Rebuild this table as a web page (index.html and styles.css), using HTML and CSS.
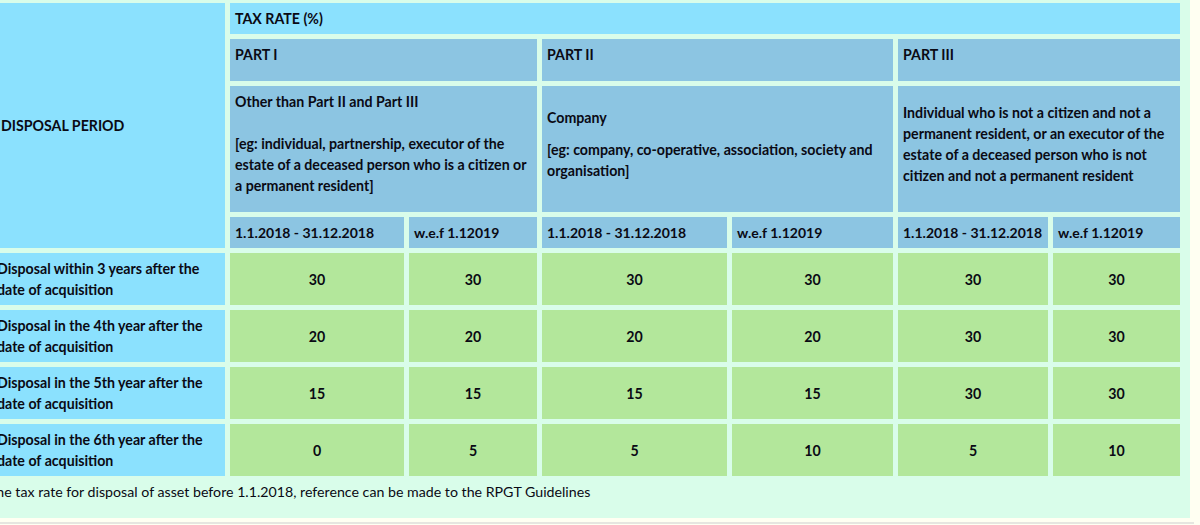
FILE: index.html
```html
<!DOCTYPE html>
<html lang="en">
<head>
<meta charset="utf-8">
<title>RPGT Rates</title>
<link rel="stylesheet" href="styles.css">
</head>
<body>
<div class="page">
  <table class="rates">
    <colgroup>
      <col class="c1"><col class="c2"><col class="c3"><col class="c4"><col class="c5"><col class="c6"><col class="c7">
    </colgroup>
    <tr>
      <th rowspan="4" class="period">DISPOSAL PERIOD</th>
      <th colspan="6" class="top">TAX RATE (%)</th>
    </tr>
    <tr>
      <th colspan="2" class="part"><p>PART I</p></th>
      <th colspan="2" class="part"><p>PART II</p></th>
      <th colspan="2" class="part"><p>PART III</p></th>
    </tr>
    <tr>
      <th colspan="2" class="desc"><p>Other than Part II and Part III<br><br>[eg: individual, partnership, executor of the estate of a deceased person who is a citizen or a permanent resident]</p></th>
      <th colspan="2" class="desc"><p>Company</p><p>[eg: company, co-operative, association, society and organisation]</p></th>
      <th colspan="2" class="desc"><p>Individual who is not a citizen and not a permanent resident, or an executor of the estate of a deceased person who is not citizen and not a permanent resident</p></th>
    </tr>
    <tr>
      <th class="date">1.1.2018 - 31.12.2018</th>
      <th class="date">w.e.f 1.12019</th>
      <th class="date">1.1.2018 - 31.12.2018</th>
      <th class="date">w.e.f 1.12019</th>
      <th class="date">1.1.2018 - 31.12.2018</th>
      <th class="date">w.e.f 1.12019</th>
    </tr>
    <tr>
      <td class="label">Disposal within 3 years after the date of acquisition</td>
      <td class="num">30</td><td class="num">30</td><td class="num">30</td><td class="num">30</td><td class="num">30</td><td class="num">30</td>
    </tr>
    <tr>
      <td class="label">Disposal in the 4th year after the date of acquisition</td>
      <td class="num">20</td><td class="num">20</td><td class="num">20</td><td class="num">20</td><td class="num">30</td><td class="num">30</td>
    </tr>
    <tr>
      <td class="label">Disposal in the 5th year after the date of acquisition</td>
      <td class="num">15</td><td class="num">15</td><td class="num">15</td><td class="num">15</td><td class="num">30</td><td class="num">30</td>
    </tr>
    <tr>
      <td class="label">Disposal in the 6th year after the date of acquisition</td>
      <td class="num">0</td><td class="num">5</td><td class="num">5</td><td class="num">10</td><td class="num">5</td><td class="num">10</td>
    </tr>
  </table>
  <p class="note">The tax rate for disposal of asset before 1.1.2018, reference can be made to the RPGT Guidelines</p>
</div>
<div class="rule"></div>
</body>
</html>
```
FILE: styles.css
```css
html, body {
  margin: 0;
  padding: 0;
  background: #fffff2;
}
body {
  font-family: Lato, "Open Sans", sans-serif;
  font-size: 14.2px;
  line-height: 21px;
  color: #0a0a14;
  overflow: hidden;
}
.page {
  width: 1198px;
  margin: -2px 0 0 -13px;
  padding: 0 5px 16px 0;
  background: #d9fdea;
}
.rates {
  table-layout: fixed;
  width: 1198px;
  border-collapse: separate;
  border-spacing: 5px;
}
.c1 { width: 233px; }
.c2 { width: 174px; }
.c3 { width: 128px; }
.c4 { width: 185px; }
.c5 { width: 161px; }
.c6 { width: 150px; }
.c7 { width: 127px; }
.rates th,
.rates td {
  padding: 5px;
  text-align: left;
  font-weight: 700;
  box-sizing: border-box;
}
.rates p {
  margin: 0 0 11px;
}
.period,
.top {
  background: #8be1fe;
  vertical-align: middle;
}
.rates .period {
  padding-left: 9px;
}
.part,
.desc,
.date {
  background: #8cc5e2;
}
.part {
  vertical-align: top;
}
.desc {
  vertical-align: middle;
}
.date {
  white-space: nowrap;
  font-size: 14px;
}
.label {
  background: #8be1fe;
  vertical-align: middle;
}
.rates .num {
  background: #b3e79b;
  text-align: center;
  vertical-align: middle;
}
.note {
  margin: 0;
  padding-left: 1px;
  font-weight: 400;
}
.rule {
  margin-top: 4px;
  width: 1194px;
  border-top: 2px solid #e6e6e0;
}
```
